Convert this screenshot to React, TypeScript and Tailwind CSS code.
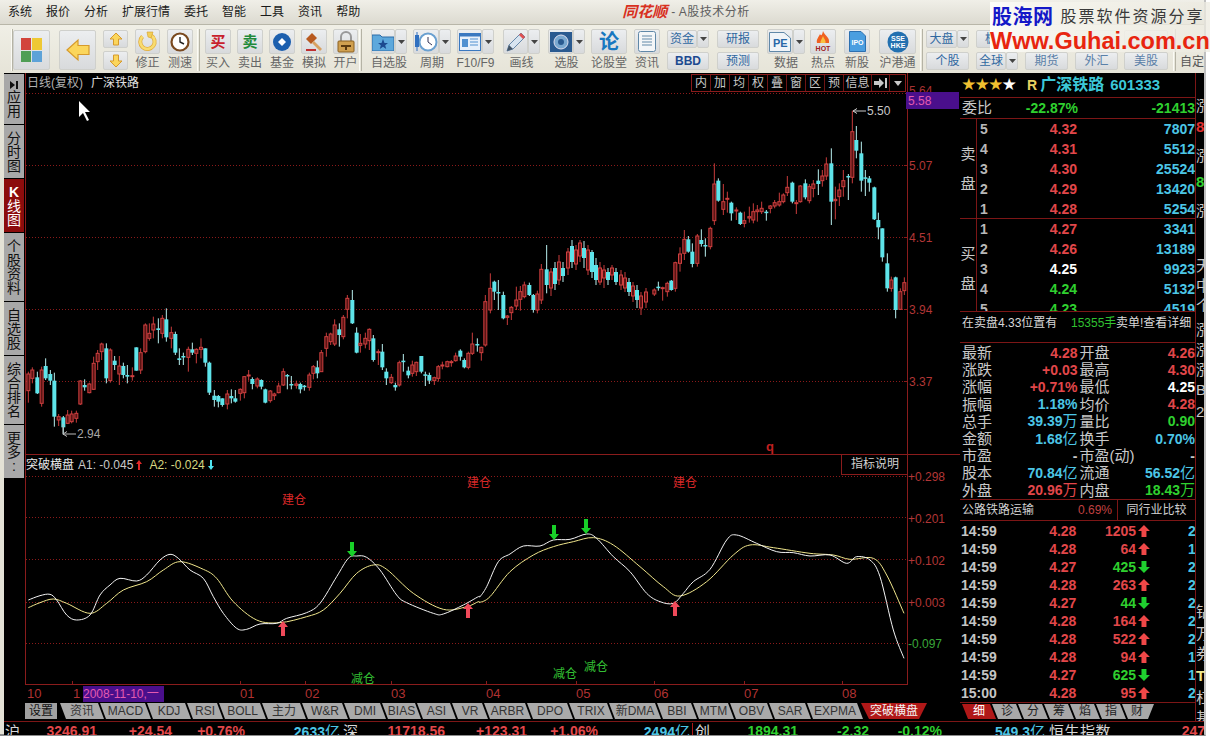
import React from "react";

type C = number[];
const z8: C[] = [[85,905,998,912,962,0],[97,892,940,900,925,0],[112,905,972,922,970,1],[125,890,1010,900,1000,0],[137,865,930,888,925,1],[151,900,945,912,932,1],[163,908,1070,932,1040,1],[176,1032,1068,1040,1050,0],[190,1038,1095,1042,1072,1],[203,1020,1062,1035,1060,0],[215,1022,1060,1032,1055,0],[229,1022,1058,1030,1045,0],[241,930,1005,933,1002,0],[254,928,962,945,952,1],[268,938,970,942,968,0],[281,860,960,880,958,0],[293,840,900,850,875,0],[305,818,870,822,845,0],[319,820,940,835,925,1],[331,835,938,840,932,0],[344,858,900,872,885,1],[358,858,945,888,912,0],[370,878,925,888,915,1],[382,885,940,915,920,1],[397,892,932,917,920,0],[409,832,902,832,902,1],[422,835,912,848,900,0],[436,760,850,765,845,0],[448,760,812,790,805,0],[460,740,805,762,780,0],[475,745,820,775,780,1],[487,735,805,745,790,0],[499,715,815,748,802,1],[514,770,835,788,805,0],[526,785,855,792,848,1],[538,835,885,865,870,1],[550,848,885,858,860,1],[565,830,905,838,862,0],[577,818,855,838,848,1],[589,835,880,838,850,0]];
const z9: C[] = [[3,325,385,352,358,0],[16,355,410,355,398,1],[28,395,495,398,488,1],[43,480,530,497,510,1],[55,495,532,498,515,1],[67,505,530,505,525,1],[82,480,538,492,522,0],[94,478,520,498,505,1],[106,480,518,505,515,1],[121,475,512,478,490,0],[133,438,505,440,488,0],[146,420,452,435,438,0],[157,442,478,447,462,1],[172,442,475,447,468,0],[184,448,478,450,470,1],[196,476,520,478,518,1],[211,480,518,483,512,0],[223,488,510,492,497,0],[236,458,490,468,488,0],[250,415,468,425,465,0],[262,432,478,435,437,1],[274,438,478,462,465,1],[289,452,476,462,466,0],[301,458,490,462,478,1],[313,465,482,467,469,1],[328,428,482,435,472,0],[340,405,448,410,430,0],[352,392,445,412,430,1],[364,360,425,368,425,0],[379,308,380,320,355,0],[392,308,345,312,335,0],[404,268,348,285,342,0],[418,280,350,298,315,1],[430,255,328,262,320,0],[442,195,265,205,238,0],[457,180,282,210,280,1],[470,292,370,308,368,1],[481,312,368,340,346,0],[496,308,355,325,342,0],[508,295,360,298,332,0],[520,315,395,325,390,1],[535,358,405,365,367,0],[547,342,420,365,412,1],[559,415,465,425,445,1],[574,432,462,442,458,0],[586,458,482,465,472,1],[598,392,470,398,465,0],[610,372,425,392,395,1],[625,410,445,422,436,1],[637,392,440,405,430,0],[649,395,438,397,425,0],[664,378,430,378,425,1],[676,425,468,433,436,1],[688,428,462,435,452,1],[703,440,465,443,452,0],[715,405,455,410,445,0],[727,395,418,405,408,0],[742,392,412,395,410,0],[754,390,410,395,397,0],[767,368,395,378,392,0],[781,358,392,362,380,1],[793,385,415,390,412,1],[805,365,418,370,412,0],[817,308,375,342,370,0],[832,325,365,342,346,1],[844,350,392,352,368,0],[856,195,350,215,345,0],[871,130,250,175,240,0],[883,152,210,155,185,1],[895,150,240,186,190,1],[910,185,268,195,265,1],[922,255,285,258,262,0],[934,228,270,232,248,0],[949,170,240,210,228,0],[961,168,242,185,208,0],[973,155,205,165,200,0],[988,158,198,165,195,1],[1000,192,248,195,240,1],[1012,182,250,192,240,0],[1024,102,222,118,210,0],[1040,45,190,118,165,1]];
const mid: C[] = [[551,268,296,272,288,0],[555,262,290,268,284,1],[559,255,285,262,280,0],[563,262,282,268,276,1],[568,248,275,252,268,0],[572,240,268,246,262,1],[576,245,270,250,264,0],[580,240,262,243,256,0],[584,241,268,248,258,1],[588,245,275,250,270,0],[592,250,278,252,272,1],[596,258,285,265,280,1],[600,262,285,268,282,0],[604,265,288,270,278,0],[608,268,285,272,280,1],[612,265,280,268,275,0],[616,268,285,272,282,1],[621,270,290,275,285,0],[625,272,292,278,288,0],[629,278,296,282,292,1],[633,282,302,286,296,0],[637,285,308,290,300,1],[641,292,315,296,308,0],[646,288,308,292,302,0]];
const z10: C[] = [[13,595,618,600,612,0],[25,575,602,590,592,1],[38,590,632,593,595,0],[52,575,620,580,605,0],[64,570,602,572,600,1],[76,515,605,518,595,0],[90,472,545,492,520,0],[103,420,510,448,490,0],[115,438,488,448,485,1],[127,460,532,485,522,1],[142,432,530,438,520,0],[154,418,470,450,462,1],[166,445,500,465,468,1],[181,410,478,415,470,0],[193,220,405,282,392,0],[205,265,335,272,332,1],[220,282,375,335,358,0],[232,305,368,325,328,0],[244,335,392,338,370,1],[259,352,390,360,363,0],[271,365,405,368,402,1],[283,365,412,392,400,0],[298,350,398,380,384,0],[310,340,400,365,390,0],[322,345,395,360,365,0],[335,335,372,355,365,0],[349,360,392,365,368,1],[361,345,370,348,355,0],[374,330,355,338,348,0],[388,308,350,335,345,0],[400,310,340,315,335,0],[412,258,318,292,308,0],[427,275,340,278,335,1],[439,330,372,338,340,0],[451,285,338,288,335,0],[466,268,328,280,322,1],[478,282,340,290,332,0],[490,270,322,282,295,0],[505,238,315,272,282,1],[517,240,290,258,272,0],[529,202,270,222,258,0],[544,175,405,220,335,1],[556,290,388,328,332,0],[568,280,348,300,320,0],[580,240,320,272,290,0],[595,252,330,258,262,1],[607,62,280,125,262,0],[619,108,205,150,182,1],[634,155,305,190,272,1],[646,240,318,262,265,1],[658,258,305,265,278,1],[673,290,390,292,388,1],[685,368,448,390,412,1],[697,415,515,415,502,1],[712,490,605,520,595,1],[724,560,605,570,595,0],[737,560,685,562,660,1],[751,595,660,605,658,0],[763,562,615,578,602,0]];

const conv = (a: C[], ox: number, oy: number, s: number) => a.map(([x, w1, w2, b1, b2, c]) => [ox + x / s, oy + w1 / s, oy + w2 / s, oy + b1 / s, oy + b2 / s, c]);
const candles = [...conv(z8, 0, 70, 3), ...conv(z9, 200, 230, 3), ...conv(mid, 0, 0, 1), ...conv(z10, 650, 90, 3)];

const z = (pts: number[][], ox: number, oy: number) => pts.map(([x, y]) => [ox + x / 3, oy + y / 3]);
const white = [...z([[25,450],[60,437],[90,433],[110,450],[140,495],[170,510],[210,495],[240,435],[270,405],[300,385],[350,393],[380,375],[420,330],[450,313],[475,325],[510,360],[550,385],[580,440],[610,490],[650,535],[680,538],[720,522],[770,520],[800,505],[860,488],[900,460],[950,380],[985,325],[1010,318],[1040,322],[1080,360],[1130,435],[1160,458],[1240,490],[1270,492],[1330,465],[1375,440]],20,450), ...z([[0,440],[20,410],[55,335],[90,312],[130,288],[180,288],[220,270],[270,268],[320,252],[350,265],[400,320],[450,365],[500,430],[540,455],[580,460],[610,430],[640,395],[690,358],[740,270],[770,255],[830,280],[890,305],[940,308],[990,318],[1050,315],[1100,340],[1130,320],[1170,330],[1200,380],[1240,540],[1272,625]],480,450)];
const yellow = [...z([[25,473],[60,458],[100,447],[140,460],[210,490],[260,460],[310,420],[380,395],[430,360],[480,335],[550,358],[590,385],[640,455],[710,510],[780,518],[860,500],[910,480],[960,430],[1010,370],[1060,345],[1100,358],[1180,430],[1270,478],[1340,470],[1375,455]],20,450), ...z([[0,457],[30,440],[90,365],[160,315],[220,290],[280,275],[340,263],[400,285],[480,350],[550,410],[600,438],[680,395],[760,315],[810,285],[880,293],[990,310],[1060,315],[1110,328],[1180,325],[1220,375],[1272,490]],480,450)];
const smooth = (p: number[][]) => {
  let d = `M${p[0][0]} ${p[0][1]}`;
  for (let i = 0; i < p.length - 1; i++) {
    const a = p[Math.max(i - 1, 0)], b = p[i], c = p[i + 1], e = p[Math.min(i + 2, p.length - 1)];
    d += `C${b[0] + (c[0] - a[0]) / 6} ${b[1] + (c[1] - a[1]) / 6} ${c[0] - (e[0] - b[0]) / 6} ${c[1] - (e[1] - b[1]) / 6} ${c[0]} ${c[1]}`;
  }
  return d;
};

function Arrow({ x, y, up, color, s = 1 }: { x: number; y: number; up: boolean; color: string; s?: number }) {
  const pts = up ? "0,-7 5,-1 2,-1 2,8 -2,8 -2,-1 -5,-1" : "0,7 5,1 2,1 2,-8 -2,-8 -2,1 -5,1";
  return <polygon points={pts} fill={color} transform={`translate(${x} ${y}) scale(${s})`} />;
}

function PriceChart() {
  return (
    <div className="relative h-[381px] w-[935px] shrink-0">
      <svg className="block" width="935" height="381" viewBox="25 73 935 381">
        {[93, 165, 237, 309, 381].map((y) => (
          <line key={y} x1="26" x2="907" y1={y + 0.5} y2={y + 0.5} stroke="#8a1a1a" strokeDasharray="1 2" />
        ))}
        <line x1="25.5" x2="25.5" y1="73" y2="454" stroke="#8a1c1c" />
        <line x1="907.5" x2="907.5" y1="73" y2="454" stroke="#8a1c1c" />
        {[165, 237, 309, 381].map((y) => (
          <line key={y} x1="904" x2="907" y1={y + 0.5} y2={y + 0.5} stroke="#8a1c1c" />
        ))}
        <text x="909" y="95" fontSize="12" fill="#a83232">5.64</text>
        <rect x="906" y="92" width="53" height="17" fill="#4a0f8c" />
        <text x="908" y="105" fontSize="12" fill="#e45ab0">5.58</text>
        {[["5.07", 165], ["4.51", 237], ["3.94", 309], ["3.37", 381]].map(([t, y]) => (
          <text key={t as string} x="909" y={(y as number) + 5} fontSize="12" fill="#b23636">{t}</text>
        ))}
        {candles.map(([x, w1, w2, b1, b2, c], i) =>
          c ? (
            <g key={i}>
              <line x1={x} x2={x} y1={w1} y2={w2} stroke="#b8f0f0" strokeWidth="1" />
              <rect x={x - 2} y={b1} width="4" height={Math.max(b2 - b1, 1.5)} fill="#5ee4ea" />
            </g>
          ) : (
            <g key={i}>
              <line x1={x} x2={x} y1={w1} y2={b1} stroke="#c83c3c" strokeWidth="1" />
              <line x1={x} x2={x} y1={b2} y2={w2} stroke="#c83c3c" strokeWidth="1" />
              <rect x={x - 1.5} y={b1} width="3" height={Math.max(b2 - b1, 1)} fill="#5a1414" stroke="#d04040" strokeWidth="1" />
            </g>
          )
        )}
        <path d="M853 111H866M853 111l4-2.5M853 111l4 2.5" stroke="#cccccc" strokeWidth="1" fill="none" />
        <text x="867" y="115" fontSize="12" fill="#c8c8c8">5.50</text>
        <path d="M63 424V434H76M63 434l4-2.5M63 434l4 2.5" stroke="#bbbbbb" strokeWidth="1" fill="none" />
        <text x="77" y="438" fontSize="12" fill="#a8a8a8">2.94</text>
        <text x="766" y="451" fontSize="13" fontWeight="700" fill="#c02020">q</text>
        <polygon points="79,101 79,117 83,113 87,121 89,120 85,112 90,112" fill="#ffffff" />
      </svg>
      <div className="absolute left-[2px] top-[2px] flex text-[12px] leading-[16px]">
        <span className="text-[#b0b0b0]">日线(复权)</span>
        <span className="ml-[8px] text-[#e0e0e0]">广深铁路</span>
      </div>
      <div className="absolute left-[666px] top-[1px] flex h-[18px] border border-[#8a1c1c] text-[12px] leading-[16px] text-[#c8c8c8]">
        {["内", "加", "均", "权", "叠", "窗", "区", "预"].map((t) => (
          <div key={t} className="w-[19px] border-r border-[#6e1414] text-center">{t}</div>
        ))}
        <div className="w-[28px] border-r border-[#6e1414] text-center">信息</div>
        <div className="flex w-[18px] items-center justify-center border-r border-[#6e1414]">
          <svg width="14" height="10" viewBox="0 0 14 10"><path d="M0 3H5V0L10 5 5 10V7H0Z M11 0H13V10H11Z" fill="#c8c8c8" /></svg>
        </div>
        <div className="flex w-[15px] items-center justify-center">
          <svg width="8" height="5" viewBox="0 0 8 5"><path d="M0 0H8L4 5Z" fill="#c8c8c8" /></svg>
        </div>
      </div>
    </div>
  );
}

function IndicatorChart() {
  return (
    <div className="relative h-[231px] w-[935px] shrink-0">
      <svg className="block" width="935" height="231" viewBox="25 454 935 231">
        <line x1="25" x2="960" y1="454.5" y2="454.5" stroke="#8a1c1c" />
        <line x1="25.5" x2="25.5" y1="454" y2="685" stroke="#8a1c1c" />
        <line x1="907.5" x2="907.5" y1="454" y2="685" stroke="#8a1c1c" />
        <line x1="25" x2="907" y1="684.5" y2="684.5" stroke="#8a1c1c" />
        {[72, 240, 305, 391, 486, 576, 654, 744, 842].map((x) => (
          <line key={x} x1={x + 0.5} x2={x + 0.5} y1="681" y2="685" stroke="#8a1c1c" />
        ))}
        {[476, 517, 559, 602, 643].map((y) => (
          <line key={y} x1="26" x2="907" y1={y + 0.5} y2={y + 0.5} stroke="#8a1a1a" strokeDasharray="1 2" />
        ))}
        {[["+0.298", 476], ["+0.201", 518], ["+0.102", 560], ["+0.003", 602]].map(([t, y]) => (
          <text key={t as string} x="908" y={(y as number) + 5} fontSize="12" fill="#b23636">{t}</text>
        ))}
        <text x="908" y="648" fontSize="12" fill="#3aa83a">-0.097</text>
        <path d={smooth(yellow)} fill="none" stroke="#f0e68c" strokeWidth="1" />
        <path d={smooth(white)} fill="none" stroke="#f4f4f4" strokeWidth="1" />
        {[[283, 628], [468, 610], [675, 608]].map(([x, y]) => <Arrow key={x} x={x} y={y} up color="#f04a5a" />)}
        {[[352, 550], [554, 533], [586, 527]].map(([x, y]) => <Arrow key={x} x={x} y={y} up={false} color="#18d028" />)}
        {[[294, 504], [479, 487], [685, 487]].map(([x, y]) => (
          <text key={x} x={x} y={y} fontSize="12" textAnchor="middle" fill="#d82828">建仓</text>
        ))}
        {[[363, 683], [565, 678], [596, 671]].map(([x, y]) => (
          <text key={x} x={x} y={y} fontSize="12" textAnchor="middle" fill="#34c034">减仓</text>
        ))}
      </svg>
      <div className="absolute left-[1px] top-[3px] flex items-center text-[12px] leading-[16px]">
        <span className="text-[#e8e8e8]">突破横盘</span>
        <span className="ml-[4px] text-[#c8c8c8]">A1: -0.045</span>
        <svg className="ml-[2px]" width="8" height="12" viewBox="-4 -6 8 12"><path d="M0-5 3-1H1V5H-1V-1H-3Z" fill="#e02828" /></svg>
        <span className="ml-[6px] text-[#d8d880]">A2: -0.024</span>
        <svg className="ml-[2px]" width="8" height="12" viewBox="-4 -6 8 12"><path d="M0 5 3 1H1V-5H-1V1H-3Z" fill="#50e4f0" /></svg>
      </div>
      <div className="absolute left-[816px] top-[0px] h-[21px] w-[67px] border-b border-l border-[#8a1c1c] text-center text-[12px] leading-[20px] text-[#d0d0d0]">指标说明</div>
    </div>
  );
}

const monthTicks: [string, string][] = [["10", "w-[46px]"], ["1", "w-[10px]"]];
const months = [["01", "w-[65px]"], ["02", "w-[86px]"], ["03", "w-[95px]"], ["04", "w-[90px]"], ["05", "w-[78px]"], ["06", "w-[90px]"], ["07", "w-[98px]"], ["08", "w-[40px]"]];

function TimeAxis() {
  return (
    <div className="flex h-[18px] w-[935px] shrink-0 items-center pl-[2px] text-[13px] leading-[16px] text-[#b03232]">
      {monthTicks.map(([t, w]) => <div key={t} className={w}>{t}</div>)}
      <div className="h-[16px] w-[81px] bg-[#4a0f8c] text-[12px] text-[#e45ab0]">2008-11-10,一</div>
      <div className="w-[76px]" />
      {months.map(([t, w]) => <div key={t} className={w}>{t}</div>)}
    </div>
  );
}

const tabs: [string, string][] = [["资讯", "w-[46px]"], ["MACD", "w-[53px]"], ["KDJ", "w-[46px]"], ["RSI", "w-[38px]"], ["BOLL", "w-[49px]"], ["主力", "w-[46px]"], ["W&R", "w-[48px]"], ["DMI", "w-[44px]"], ["BIAS", "w-[41px]"], ["ASI", "w-[41px]"], ["VR", "w-[38px]"], ["ARBR", "w-[49px]"], ["DPO", "w-[48px]"], ["TRIX", "w-[46px]"], ["新DMA", "w-[54px]"], ["BBI", "w-[42px]"], ["MTM", "w-[43px]"], ["OBV", "w-[45px]"], ["SAR", "w-[44px]"], ["EXPMA", "w-[58px]"]];

function TabBar() {
  return (
    <div className="flex h-[18px] w-[935px] shrink-0 items-start text-[12px] leading-[16px]">
      <div className="h-[16px] w-[32px] bg-[#a0a0a0] text-center text-[#111]">设置</div>
      <div className="w-[3px]" />
      {tabs.map(([t, w]) => (
        <div key={t} className={`${w} -mr-[6px] h-[16px] shrink-0 bg-[#aaaaaa] pr-[2px] text-center text-[#333] [clip-path:polygon(0_0,calc(100%-8px)_0,calc(100%-2px)_100%,6px_100%)]`}>{t}</div>
      ))}
      <div className="ml-[2px] h-[16px] w-[66px] shrink-0 bg-[#b01818] text-center text-[#f4f4f4] [clip-path:polygon(0_0,100%_0,calc(100%-8px)_100%,8px_100%)]">突破横盘</div>
    </div>
  );
}

const sideTabs = [
  { c: ["应", "用"], h: "h-[50px]", icon: true },
  { c: ["分", "时", "图"], h: "h-[53px]" },
  { c: ["K", "线", "图"], h: "h-[53px]", active: true },
  { c: ["个", "股", "资", "料"], h: "h-[68px]" },
  { c: ["自", "选", "股"], h: "h-[53px]" },
  { c: ["综", "合", "排", "名"], h: "h-[68px]" },
  { c: ["更", "多", ":"], h: "h-[53px]" },
];

function Sidebar() {
  return (
    <div className="flex w-[21px] shrink-0 flex-col gap-[1px] bg-black pt-[1px] text-[14px] leading-[14px]">
      {sideTabs.map((t) => (
        <div key={t.c.join("")} className={`${t.h} flex w-[20px] flex-col items-center justify-center ${t.active ? "bg-[#8c0c0c] text-white" : "bg-[#a8a8a8] text-[#111]"}`}>
          {t.icon && (
            <svg className="mb-[1px]" width="8" height="8" viewBox="0 0 8 8"><path d="M0 0 5 4 0 8ZM6 0H8V8H6Z" fill="#111" /></svg>
          )}
          {t.c.map((ch, i) => <div key={i} className={ch === "K" ? "font-bold" : ""}>{ch}</div>)}
        </div>
      ))}
    </div>
  );
}

/* ---------- right panel ---------- */
const rd = "text-[#e2474a]";
const cy = "text-[#4cc6e6]";
const gn = "text-[#2fd02f]";
const wh = "text-white";

function Quote({ rows }: { rows: [string, string, string, string][] }) {
  return (
    <div className="flex-1">
      {rows.map(([n, p, pc, v]) => (
        <div key={n} className="flex h-[20px] items-center text-[14px] font-bold leading-[20px]">
          <span className="ml-[3px] w-[12px] text-[#b8b8b8]">{n}</span>
          <span className={`w-[85px] text-right ${pc}`}>{p}</span>
          <span className={`w-[118px] text-right ${cy}`}>{v}</span>
        </div>
      ))}
    </div>
  );
}

const stats: [string, string, string, string, string, string, string, string][] = [
  ["最新", "4.28", "", rd, "开盘", "4.26", "", rd],
  ["涨跌", "+0.03", "", rd, "最高", "4.30", "", rd],
  ["涨幅", "+0.71%", "", rd, "最低", "4.25", "", wh],
  ["振幅", "1.18%", "", cy, "均价", "4.28", "", rd],
  ["总手", "39.39", "万", cy, "量比", "0.90", "", gn],
  ["金额", "1.68", "亿", cy, "换手", "0.70%", "", cy],
  ["市盈", "-", "", "text-[#c8c8c8]", "市盈(动)", "-", "", "text-[#c8c8c8]"],
  ["股本", "70.84", "亿", cy, "流通", "56.52", "亿", cy],
  ["外盘", "20.96", "万", rd, "内盘", "18.43", "万", gn],
];

const trades: [string, string, string, string, boolean, string][] = [
  ["14:59", "4.28", rd, "1205", true, "2"],
  ["14:59", "4.28", rd, "64", true, "1"],
  ["14:59", "4.27", rd, "425", false, "2"],
  ["14:59", "4.28", rd, "263", true, "2"],
  ["14:59", "4.27", rd, "44", false, "2"],
  ["14:59", "4.28", rd, "164", true, "2"],
  ["14:59", "4.28", rd, "522", true, "2"],
  ["14:59", "4.28", rd, "94", true, "1"],
  ["14:59", "4.27", rd, "625", false, "1"],
  ["15:00", "4.28", rd, "95", true, "2"],
];

const strip: [string, string, string][] = [
  ["涨", "text-[#c8c8c8]", "h-[21px]"], ["8", "text-[#e03030] font-bold", "h-[29px]"], ["涨", "text-[#c8c8c8]", "h-[26px]"], ["8", "text-[#30d030] font-bold", "h-[29px]"],
  ["涨", "text-[#c8c8c8]", "h-[25px]"], ["", "", "h-[30px]"], ["天", "text-[#c8c8c8]", "h-[20px]"], ["中", "text-[#c8c8c8]", "h-[20px]"], ["个", "text-[#c8c8c8]", "h-[24px]"],
  ["涨", "text-[#c8c8c8]", "h-[20px]"], ["涨", "text-[#c8c8c8]", "h-[20px]"], ["涨", "text-[#c8c8c8]", "h-[20px]"], ["B", "text-[#c8c8c8]", "h-[22px]"], ["2", "text-[#c8c8c8]", "h-[20px]"],
  ["", "", "h-[180px]"], ["钻", "text-[#c8c8c8]", "h-[22px]"], ["万", "text-[#c8c8c8]", "h-[20px]"], ["券", "text-[#c8c8c8]", "h-[22px]"], ["T", "text-[#f0e890] font-bold", "h-[22px]"], ["杠", "text-[#c8c8c8]", "h-[20px]"], ["基", "text-[#c8c8c8]", "h-[20px]"],
];

function RightPanel() {
  const line = "border-b border-[#7c1616]";
  return (
    <div className="flex w-[245px] shrink-0">
      <div className="flex w-[236px] shrink-0 flex-col border-r border-[#7c1616]">
        <div className={`flex h-[25px] shrink-0 items-center pl-[2px] ${line}`}>
          <span className="text-[13.5px] leading-[20px] text-[#f0c030]">★★★</span>
          <span className="text-[13.5px] leading-[20px] text-white">★</span>
          <span className="ml-[11px] text-[14px] font-bold text-[#e8d060]">R</span>
          <span className="ml-[3px] text-[16px] font-bold text-[#3cc8d8]">广深铁路</span>
          <span className="ml-[6px] text-[15px] font-bold text-[#3cc8d8]">601333</span>
        </div>
        <div className={`flex h-[21px] shrink-0 items-center ${line}`}>
          <span className="ml-[2px] w-[32px] text-[15px] text-[#c8c8c8]">委比</span>
          <span className={`w-[84px] text-right text-[14px] font-bold ${gn}`}>-22.87%</span>
          <span className={`w-[117px] text-right text-[14px] font-bold ${gn}`}>-21413</span>
        </div>
        <div className={`flex h-[100px] shrink-0 ${line}`}>
          <div className="flex w-[17px] flex-col items-center justify-center gap-[14px] border-r border-[#7c1616] text-[15px] leading-[16px] text-[#c8c8c8]"><span>卖</span><span>盘</span></div>
          <Quote rows={[["5", "4.32", rd, "7807"], ["4", "4.31", rd, "5512"], ["3", "4.30", rd, "25524"], ["2", "4.29", rd, "13420"], ["1", "4.28", rd, "5254"]]} />
        </div>
        <div className={`flex h-[93px] shrink-0 overflow-hidden ${line}`}>
          <div className="flex w-[17px] flex-col items-center gap-[14px] border-r border-[#7c1616] pt-[27px] text-[15px] leading-[16px] text-[#c8c8c8]"><span>买</span><span>盘</span></div>
          <Quote rows={[["1", "4.27", rd, "3341"], ["2", "4.26", rd, "13189"], ["3", "4.25", wh, "9923"], ["4", "4.24", gn, "5132"], ["5", "4.23", gn, "4519"]]} />
        </div>
        <div className="flex h-[21px] shrink-0 items-center whitespace-nowrap pl-[2px] text-[12px] leading-[16px] text-[#d8d8d8]">
          <span className="w-[109px]">在卖盘4.33位置有</span>
          <span className="w-[45px] text-[#30c030]">15355手</span>
          <span>卖单!查看详细</span>
        </div>
        <div className={`h-[10px] shrink-0 ${line}`} />
        <div className={`h-[157px] shrink-0 pt-[1px] ${line}`}>
          {stats.map(([a, b, bu, bc, c, d, du, dc]) => (
            <div key={a} className="flex h-[17.2px] items-center text-[15px] leading-[17px] text-[#c8c8c8]">
              <span className="ml-[2px] w-[32px]">{a}</span>
              <span className={`w-[84px] text-right ${bc}`}><b className="text-[14px]">{b}</b>{bu}</span>
              <span className="ml-[2px] w-[58px] whitespace-nowrap">{c}</span>
              <span className={`w-[58px] text-right ${dc}`}><b className="text-[14px]">{d}</b>{du}</span>
            </div>
          ))}
        </div>
        <div className={`flex h-[21px] shrink-0 items-center text-[12px] leading-[16px] ${line}`}>
          <span className="ml-[2px] w-[85px] text-[#d0d0d0]">公路铁路运输</span>
          <span className="w-[65px] text-right text-[#c04040]">0.69%</span>
          <div className="ml-[5px] flex h-full flex-1 items-center justify-center border-l border-[#7c1616] text-[#d0d0d0]">同行业比较</div>
        </div>
        <div className={`h-[182px] shrink-0 pt-[1px] ${line}`}>
          {trades.map(([t, p, pc, v, up, n], i) => (
            <div key={i} className="flex h-[18px] items-center text-[14px] font-bold leading-[18px]">
              <span className="ml-[1px] w-[36px] text-[#c4c4c4]">{t}</span>
              <span className={`w-[80px] text-right ${pc}`}>{p}</span>
              <span className={`w-[60px] text-right ${up ? rd : gn}`}>{v}</span>
              <svg className="ml-[2px]" width="12" height="12" viewBox="-6 -6 12 12">
                <path d={up ? "M0-6 6 0H2.5V6H-2.5V0H-6Z" : "M0 6 6 0H2.5V-6H-2.5V0H-6Z"} fill={up ? "#f04848" : "#1fd02f"} />
              </svg>
              <span className={`ml-[38px] w-[7px] overflow-hidden ${cy}`}>{n}</span>
            </div>
          ))}
        </div>
        <div className="flex h-[18px] shrink-0 items-start pl-[2px] pt-[1px] text-[12px] leading-[15px]">
          <div className="-mr-[6px] h-[15px] w-[36px] shrink-0 bg-[#b01818] pr-[2px] text-center text-white [clip-path:polygon(0_0,calc(100%-8px)_0,calc(100%-2px)_100%,6px_100%)]">细</div>
          {["诊", "分", "筹", "焰", "指", "财"].map((t, i) => (
            <div key={t} className={`-mr-[6px] h-[15px] w-[32px] shrink-0 bg-[#a8a8a8] pr-[2px] text-center text-[#222] ${i === 5 ? "[clip-path:polygon(0_0,100%_0,calc(100%-6px)_100%,6px_100%)]" : "[clip-path:polygon(0_0,calc(100%-8px)_0,calc(100%-2px)_100%,6px_100%)]"}`}>{t}</div>
          ))}
        </div>
      </div>
      <div className="w-[9px] shrink-0 overflow-hidden pt-[25px] text-[15px] leading-[16px]">
        {strip.map(([t, c, h], i) => (
          <div key={i} className={`${h} ${c} whitespace-nowrap`}>{t}</div>
        ))}
      </div>
    </div>
  );
}

/* ---------- toolbar ---------- */
const btn = "flex items-center justify-center rounded-[2px] border border-[#cfd0cc] bg-[linear-gradient(#eceef0,#d8dadc)]";

function Grip() {
  return <div className="h-[42px] w-[3px] border-l border-r border-l-[#fbfbf5] border-r-[#b5b3a5]" />;
}

function Caret() {
  return <svg width="7" height="4" viewBox="0 0 7 4"><path d="M0 0H7L3.5 4Z" fill="#444" /></svg>;
}

function Icon({ w, label, children, drop }: { w: string; label: string; children: React.ReactNode; drop?: boolean }) {
  return (
    <div className={`flex ${w} shrink-0 flex-col items-center`}>
      <div className="flex h-[25px] w-full">
        <div className={`${btn} h-[25px] flex-1 overflow-hidden`}>{children}</div>
        {drop && <div className={`${btn} h-[25px] w-[12px]`}><Caret /></div>}
      </div>
      <div className="mt-[1px] whitespace-nowrap text-[12px] leading-[16px] text-[#666]">{label}</div>
    </div>
  );
}

function Pair({ w, a, b, drop, bdrop, ac = "text-[#3068a0]", bc = "text-[#3068a0]" }: { w: string; a: string; b: string; drop?: boolean; bdrop?: boolean; ac?: string; bc?: string }) {
  return (
    <div className={`flex ${w} shrink-0 flex-col gap-[4px] text-[12px] leading-[16px]`}>
      <div className="flex h-[18px]">
        <div className={`${btn} flex-1 ${ac}`}>{a}</div>
        {drop && <div className={`${btn} w-[12px]`}><Caret /></div>}
      </div>
      <div className="flex h-[18px]">
        <div className={`${btn} flex-1 ${bc}`}>{b}</div>
        {bdrop && <div className={`${btn} w-[12px]`}><Caret /></div>}
      </div>
    </div>
  );
}

function Toolbar() {
  return (
    <div className="flex h-[49px] shrink-0 items-center border-t border-[#b8b6a8] bg-[linear-gradient(#f0efe6,#e6e4d8)] pl-[11px] pt-[2px]">
      <Grip />
      <div className={`${btn} h-[40px] w-[37px] shrink-0`}>
        <svg width="21" height="24" viewBox="0 0 21 24"><rect width="10" height="12" fill="#d2443c" /><rect x="11" width="10" height="12" fill="#eec834" /><rect y="13" width="10" height="11" fill="#4f9e55" /><rect x="11" y="13" width="10" height="11" fill="#5da2d8" /></svg>
      </div>
      <div className={`${btn} ml-[9px] h-[40px] w-[37px] shrink-0`}>
        <svg width="24" height="24" viewBox="0 0 24 24"><path d="M1 12 12 2V7.5H23V16.5H12V22Z" fill="#fbd65c" stroke="#d69a2c" strokeWidth="1.2" /></svg>
      </div>
      <div className="ml-[7px] flex w-[25px] shrink-0 flex-col gap-[3px]">
        <div className={`${btn} h-[18px]`}><svg width="14" height="14" viewBox="0 0 14 14"><path d="M7 1 13 7H9.5V13H4.5V7H1Z" fill="#fbd65c" stroke="#d69a2c" /></svg></div>
        <div className={`${btn} h-[19px]`}><svg width="14" height="14" viewBox="0 0 14 14"><path d="M7 13 13 7H9.5V1H4.5V7H1Z" fill="#fbd65c" stroke="#d69a2c" /></svg></div>
      </div>
      <div className="ml-[7px]"><Icon w="w-[25px]" label="修正">
        <svg width="21" height="21" viewBox="0 0 21 21"><path d="M14 4.5A7.2 7.2 0 1 1 5.5 5.5" fill="none" stroke="#e0aa38" strokeWidth="4" /><path d="M14 4.5A7.2 7.2 0 1 1 5.5 5.5" fill="none" stroke="#f8dc70" strokeWidth="2.6" /><path d="M10 1 16 1 14 7 11 6Z" fill="#f3cf58" stroke="#d4a030" strokeWidth=".6" /></svg>
      </Icon></div>
      <div className="ml-[7px]"><Icon w="w-[26px]" label="测速">
        <svg width="20" height="20" viewBox="0 0 20 20"><circle cx="10" cy="10" r="8.5" fill="#fff" stroke="#7a4a20" strokeWidth="2.2" /><path d="M10 5V10L14 12" stroke="#222" strokeWidth="1.4" fill="none" /></svg>
      </Icon></div>
      <div className="ml-[4px] mr-[5px]"><Grip /></div>
      <Icon w="w-[26px]" label="买入"><span className="text-[15px] font-bold leading-none text-[#c8202c]">买</span></Icon>
      <div className="ml-[6px]"><Icon w="w-[26px]" label="卖出"><span className="text-[15px] font-bold leading-none text-[#1f8a3a]">卖</span></Icon></div>
      <div className="ml-[6px]"><Icon w="w-[26px]" label="基金">
        <svg width="20" height="20" viewBox="0 0 20 20"><circle cx="10" cy="10" r="9" fill="#1c5fae" /><path d="M10 6 14 10 10 14 6 10Z" fill="#fff" /></svg>
      </Icon></div>
      <div className="ml-[6px]"><Icon w="w-[26px]" label="模拟">
        <svg width="22" height="22" viewBox="0 0 22 22"><path d="M3 8 9 2 14 7 8 13Z" fill="#b85a20" /><path d="M11 10 19 18 17 20 9 12Z" fill="#d8a060" /><rect x="3" y="18" width="10" height="2" fill="#c03030" /></svg>
      </Icon></div>
      <div className="ml-[6px]"><Icon w="w-[25px]" label="开户">
        <svg width="20" height="22" viewBox="0 0 20 22"><path d="M5 10V6A5 5 0 0 1 15 6V10" fill="none" stroke="#999" strokeWidth="2" /><rect x="2" y="10" width="16" height="11" rx="1" fill="#d0a050" stroke="#8a6020" /><rect x="5" y="14" width="10" height="2" fill="#5a3a10" /><rect x="9" y="14" width="2" height="5" fill="#5a3a10" /></svg>
      </Icon></div>
      <div className="ml-[1px] mr-[9px]"><Grip /></div>
      <Icon w="w-[36px]" label="自选股" drop>
        <svg width="22" height="18" viewBox="0 0 22 18"><path d="M0 2H8L10 4H22V18H0Z" fill="#5da8dc" stroke="#2c6ca8" /><path d="M11 6 12.5 10H16L13.2 12.3 14.2 16 11 13.8 7.8 16 8.8 12.3 6 10H9.5Z" fill="#1c4a90" /></svg>
      </Icon>
      <div className="ml-[6px]"><Icon w="w-[38px]" label="周期" drop>
        <svg width="24" height="20" viewBox="0 0 24 20"><circle cx="14" cy="10" r="8.5" fill="#fff" stroke="#6aa0d0" strokeWidth="2" /><path d="M14 5V10L18 13" stroke="#335" fill="none" /><rect x="1" y="3" width="4" height="12" fill="#3070c0" /><path d="M3 0V19" stroke="#3070c0" /></svg>
      </Icon></div>
      <div className="ml-[6px]"><Icon w="w-[37px]" label="F10/F9" drop>
        <svg width="22" height="18" viewBox="0 0 22 18"><rect x=".5" y=".5" width="21" height="17" fill="#e8f0fa" stroke="#3a78c0" /><rect x=".5" y=".5" width="21" height="3" fill="#3a78c0" /><rect x="3" y="6" width="6" height="8" fill="#5090d0" /><path d="M11 6H19M11 9H19M11 12H19" stroke="#5090d0" /></svg>
      </Icon></div>
      <div className="ml-[9px]"><Icon w="w-[37px]" label="画线" drop>
        <svg width="22" height="22" viewBox="0 0 22 22"><path d="M2 20 4 14 16 2 20 6 8 18Z" fill="#d8e4f0" stroke="#6688aa" /><path d="M16 2 20 6 18 8 14 4Z" fill="#e05050" /><path d="M2 20 4 14 8 18Z" fill="#456" /></svg>
      </Icon></div>
      <div className="ml-[8px]"><Icon w="w-[37px]" label="选股" drop>
        <svg width="22" height="20" viewBox="0 0 22 20"><rect width="22" height="20" fill="#2a5a90" /><circle cx="11" cy="10" r="7" fill="#7aa8d0" stroke="#dde" /><circle cx="11" cy="10" r="3" fill="#2a5a90" /></svg>
      </Icon></div>
      <div className="ml-[6px]"><Icon w="w-[36px]" label="论股堂"><span className="text-[20px] font-bold leading-none text-[#1878c0]">论</span></Icon></div>
      <div className="ml-[7px]"><Icon w="w-[26px]" label="资讯">
        <svg width="18" height="21" viewBox="0 0 18 21"><rect x=".5" y=".5" width="17" height="20" rx="2" fill="#f4f6f8" stroke="#6088a8" /><path d="M4 5H14M4 8H14M4 11H14M4 14H14" stroke="#6088a8" /></svg>
      </Icon></div>
      <div className="ml-[7px]"><Pair w="w-[42px]" a="资金" drop b="BBD" bc="text-[#1c4a90] font-bold" /></div>
      <div className="ml-[8px]"><Pair w="w-[42px]" a="研报" b="预测" /></div>
      <div className="ml-[8px]"><Icon w="w-[38px]" label="数据" drop>
        <svg width="22" height="20" viewBox="0 0 22 20"><path d="M.5 .5H15L21.5 6V19.5H.5Z" fill="#f0f4f8" stroke="#6088a8" /><text x="4" y="15" fontSize="11" fontWeight="700" fill="#2868a8">PE</text></svg>
      </Icon></div>
      <div className="ml-[5px]"><Icon w="w-[26px]" label="热点">
        <svg width="20" height="22" viewBox="0 0 20 22"><path d="M10 0C12 5 17 6 16 12H4C3 8 6 6 7 3 8 5 9 5 10 0Z" fill="#f06020" /><path d="M10 5C11 8 13 9 12.5 12H7.5C7 10 9 8 10 5Z" fill="#f8c040" /><text x="10" y="20" fontSize="7" textAnchor="middle" fontWeight="700" fill="#a02020">HOT</text></svg>
      </Icon></div>
      <div className="ml-[8px]"><Icon w="w-[26px]" label="新股">
        <svg width="17" height="21" viewBox="0 0 17 21"><path d="M.5 .5H12L16.5 5V20.5H.5Z" fill="#4a9ee0" stroke="#2c70b0" /><text x="8.5" y="14" fontSize="7" textAnchor="middle" fontWeight="700" fill="#fff">IPO</text></svg>
      </Icon></div>
      <div className="ml-[9px]"><Icon w="w-[37px]" label="沪港通">
        <svg width="24" height="22" viewBox="0 0 24 22"><circle cx="12" cy="11" r="10.5" fill="#2270b0" /><text x="12" y="10" fontSize="7" textAnchor="middle" fontWeight="700" fill="#fff">SSE</text><text x="12" y="17" fontSize="7" textAnchor="middle" fontWeight="700" fill="#fff">HKE</text></svg>
      </Icon></div>
      <div className="ml-[4px] mr-[3px]"><Grip /></div>
      <Pair w="w-[43px]" a="大盘" drop b="个股" />
      <div className="ml-[7px]"><Pair w="w-[42px]" a="板块" b="全球" bdrop /></div>
      <div className="ml-[7px]"><Pair w="w-[43px]" a="" b="期货" bc="text-[#5a80a8]" /></div>
      <div className="ml-[7px]"><Pair w="w-[43px]" a="" b="外汇" bc="text-[#5a80a8]" /></div>
      <div className="ml-[6px]"><Pair w="w-[44px]" a="" b="美股" bc="text-[#5a80a8]" /></div>
      <div className="ml-[5px]"><Grip /></div>
      <div className="ml-[4px] mt-[24px] whitespace-nowrap text-[12px] leading-[16px] text-[#555]">自定</div>
    </div>
  );
}

const menu = ["系统", "报价", "分析", "扩展行情", "委托", "智能", "工具", "资讯", "帮助"];

function MenuBar() {
  return (
    <div className="flex h-[24px] shrink-0 items-center bg-[linear-gradient(#f0efe8,#dcdad0)] pl-[8px] text-[12px] leading-[16px] text-[#1a1a1a]">
      <div className="flex gap-[14px]">{menu.map((m) => <span key={m}>{m}</span>)}</div>
      <span className="ml-[262px] text-[15px] font-bold italic leading-[18px] text-[#d8301f]">同花顺</span>
      <span className="ml-[4px] tracking-[0.5px] text-[#606060]">- A股技术分析</span>
    </div>
  );
}

function Watermark() {
  return (
    <div className="absolute left-[990px] top-[2px] h-[50px] w-[220px] bg-[linear-gradient(90deg,#fdfdfb_0%,#f6f5ee_18%,rgba(236,234,224,0.75)_100%)]">
      <div className="flex h-[29px] items-center">
        <span className="ml-[2px] text-[20px] font-bold tracking-[0.5px] text-[#1418c8]">股海网</span>
        <span className="ml-[7px] text-[16px] tracking-[2px] text-[#3a3a3a]">股票软件资源分享</span>
      </div>
      <div className="whitespace-nowrap text-[23.5px] font-bold leading-[20px] text-[#e8250f]">Www.Guhai.com.cn</div>
    </div>
  );
}

function StatusBar() {
  const items: [string, string, string][] = [
    ["沪", "w-[20px] pl-[1px] font-normal text-[#d8d8d8] text-[15px]", ""],
    ["3246.91", "w-[73px] text-right text-[#e2474a]", ""],
    ["+24.54", "w-[75px] text-right text-[#e2474a]", ""],
    ["+0.76%", "w-[73px] text-right text-[#e2474a]", ""],
    ["2633", "w-[95px] text-right text-[#4cc6e6]", "亿"],
    ["深", "w-[18px] pl-[3px] font-normal text-[#d8d8d8] text-[15px]", ""],
    ["11718.56", "w-[87px] text-right text-[#e2474a]", ""],
    ["+123.31", "w-[82px] text-right text-[#e2474a]", ""],
    ["+1.06%", "w-[71px] text-right text-[#e2474a]", ""],
    ["2494", "w-[92px] text-right text-[#4cc6e6]", "亿"],
    ["创", "w-[18px] ml-[2px] pl-[2px] border-l border-[#b01818] font-normal text-[#d8d8d8] text-[15px]", ""],
    ["1894.31", "w-[88px] text-right text-[#2fd02f]", ""],
    ["-2.32", "w-[71px] text-right text-[#2fd02f]", ""],
    ["-0.12%", "w-[73px] text-right text-[#2fd02f]", ""],
    ["549.3", "w-[103px] text-right text-[#4cc6e6]", "亿"],
    ["恒生指数", "w-[64px] ml-[4px] font-normal text-[#d8d8d8] text-[15px] tracking-[0.5px]", ""],
    ["247", "w-[92px] text-right text-[#e2474a]", ""],
  ];
  return (
    <div className="flex h-[14px] shrink-0 items-start overflow-hidden border-t border-[#7c1616] bg-black pt-[1px] text-[14px] font-bold leading-[17px]">
      {items.map(([t, c, u]) => (
        <div key={t} className={`${c} shrink-0 whitespace-nowrap`}>{t}{u && <span className="text-[15px] font-normal">{u}</span>}</div>
      ))}
    </div>
  );
}

export default function App() {
  return (
    <div className="relative h-[741px] w-[1210px] overflow-hidden bg-white font-['Liberation_Sans','Noto_Sans_CJK_SC',sans-serif]">
      <div className="flex h-[736px] w-[1206px] flex-col border-b-2 border-r-2 border-b-[#8c8c8c] border-r-[#c0c0c0]">
        <MenuBar />
        <Toolbar />
        <div className="flex min-h-0 flex-1 flex-col border-l-[4px] border-[#e4e2d6] bg-black">
          <div className="flex h-[648px] shrink-0">
            <Sidebar />
            <div className="flex w-[935px] shrink-0 flex-col">
              <PriceChart />
              <IndicatorChart />
              <TimeAxis />
              <TabBar />
            </div>
            <RightPanel />
          </div>
          <StatusBar />
        </div>
      </div>
      <Watermark />
    </div>
  );
}
